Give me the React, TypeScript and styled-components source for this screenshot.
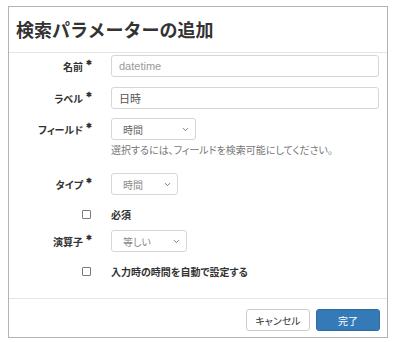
import styled, { createGlobalStyle } from "styled-components";
import { FiChevronDown } from "react-icons/fi";

const Global = createGlobalStyle`
  body {
    margin: 0;
    background: #ffffff;
    font-family: "Noto Sans CJK JP", "Noto Sans", sans-serif;
    font-feature-settings: "palt";
    color: #333333;
  }
`;

interface iSelect {
  width: number;
  text: string;
  dim?: boolean;
}

const Select: React.FC<iSelect> = ({ width, text, dim }) => {
  return (
    <SelectBox w={width}>
      <SelectText dim={dim}>{text}</SelectText>
      <Chevron>
        <FiChevronDown />
      </Chevron>
    </SelectBox>
  );
};

interface iLabel {
  text: string;
}

const Label: React.FC<iLabel> = ({ text }) => {
  return (
    <LabelCell>
      {text}
      <Star>✱</Star>
    </LabelCell>
  );
};

const App = () => {
  return (
    <>
      <Global />
      <Dialog>
        <Header>
          <Title>検索パラメーターの追加</Title>
        </Header>
        <Body>
          <Row top={2}>
            <Label text="名前" />
            <Input dim>datetime</Input>
          </Row>
          <Row top={10}>
            <Label text="ラベル" />
            <Input>日時</Input>
          </Row>
          <Row top={9}>
            <Label text="フィールド" />
            <div>
              <Select width={85} text="時間" />
              <Help>選択するには、フィールドを検索可能にしてください。</Help>
            </div>
          </Row>
          <Row top={16}>
            <Label text="タイプ" />
            <Select width={67} text="時間" dim />
          </Row>
          <Row top={12}>
            <CheckCell>
              <Check />
            </CheckCell>
            <CheckText>必須</CheckText>
          </Row>
          <Row top={9}>
            <Label text="演算子" />
            <Select width={76} text="等しい" dim />
          </Row>
          <Row top={12}>
            <CheckCell>
              <Check />
            </CheckCell>
            <CheckText>入力時の時間を自動で設定する</CheckText>
          </Row>
        </Body>
        <Footer>
          <Button>キャンセル</Button>
          <Button primary>完了</Button>
        </Footer>
      </Dialog>
    </>
  );
};

export default App;

const Dialog = styled.div`
  margin: 6px 0 0 8px;
  width: 378px;
  height: 330px;
  border: 1px solid #b3b3b3;
  display: flex;
  flex-direction: column;
`;

const Header = styled.div`
  height: 45px;
  border-bottom: 1px solid #e5e5e5;
  display: flex;
  align-items: center;
  padding-left: 7px;
`;

const Title = styled.div`
  font-size: 18px;
  font-weight: 700;
  font-feature-settings: normal;
  color: #333333;
  margin-top: -1px;
`;

const Body = styled.div`
  flex: 1;
  padding: 0 8px 0 0;
`;

const Row = styled.div<{ top: number }>`
  display: grid;
  grid-template-columns: 83px 1fr;
  column-gap: 19px;
  align-items: start;
  margin-top: ${({ top }) => top}px;
`;

const LabelCell = styled.div`
  height: 22px;
  display: flex;
  align-items: center;
  justify-content: flex-end;
  font-size: 10px;
  font-weight: 700;
  color: #333333;
`;

const Star = styled.span`
  font-size: 7px;
  font-weight: 700;
  margin-left: 3px;
  align-self: flex-start;
  margin-top: 4px;
  line-height: 1;
  color: #333333;
`;

const Input = styled.div<{ dim?: boolean }>`
  height: 22px;
  box-sizing: border-box;
  border: 1px solid #d6d6d6;
  border-radius: 3px;
  padding-left: 7px;
  display: flex;
  align-items: center;
  font-family: "Liberation Sans", "Noto Sans CJK JP", sans-serif;
  font-size: 11px;
  color: ${({ dim }) => (dim ? "#9a9a9a" : "#555555")};
`;

const SelectBox = styled.div<{ w: number }>`
  width: ${({ w }) => w}px;
  height: 22px;
  box-sizing: border-box;
  border: 1px solid #d6d6d6;
  border-radius: 3px;
  padding: 0 5px 0 11px;
  display: flex;
  align-items: center;
  justify-content: space-between;
`;

const SelectText = styled.span<{ dim?: boolean }>`
  font-size: 10px;
  color: ${({ dim }) => (dim ? "#8a8a8a" : "#666666")};
`;

const Chevron = styled.span`
  display: flex;
  font-size: 9px;
  color: #555555;
`;

const Help = styled.div`
  margin-top: 3px;
  font-size: 10px;
  color: #777777;
  line-height: 14px;
`;

const CheckCell = styled.div`
  height: 14px;
  display: flex;
  align-items: center;
  justify-content: flex-end;
  padding-right: 1px;
`;

const Check = styled.div`
  width: 7px;
  height: 7px;
  border: 1px solid #7a7a7a;
  border-radius: 1px;
  background: #ffffff;
`;

const CheckText = styled.div`
  height: 14px;
  display: flex;
  align-items: center;
  font-size: 10px;
  font-weight: 700;
  color: #333333;
`;

const Footer = styled.div`
  height: 39px;
  box-sizing: border-box;
  border-top: 1px solid #e5e5e5;
  display: flex;
  justify-content: flex-end;
  align-items: flex-start;
  gap: 6px;
  padding: 10px 7px 0 0;
`;

const Button = styled.div<{ primary?: boolean }>`
  width: 64px;
  height: 22px;
  box-sizing: border-box;
  border-radius: 3px;
  display: flex;
  align-items: center;
  justify-content: center;
  font-size: 10px;
  border: 1px solid ${({ primary }) => (primary ? "#2e6da4" : "#cccccc")};
  background: ${({ primary }) => (primary ? "#337ab7" : "#ffffff")};
  color: ${({ primary }) => (primary ? "#ffffff" : "#333333")};
`;
